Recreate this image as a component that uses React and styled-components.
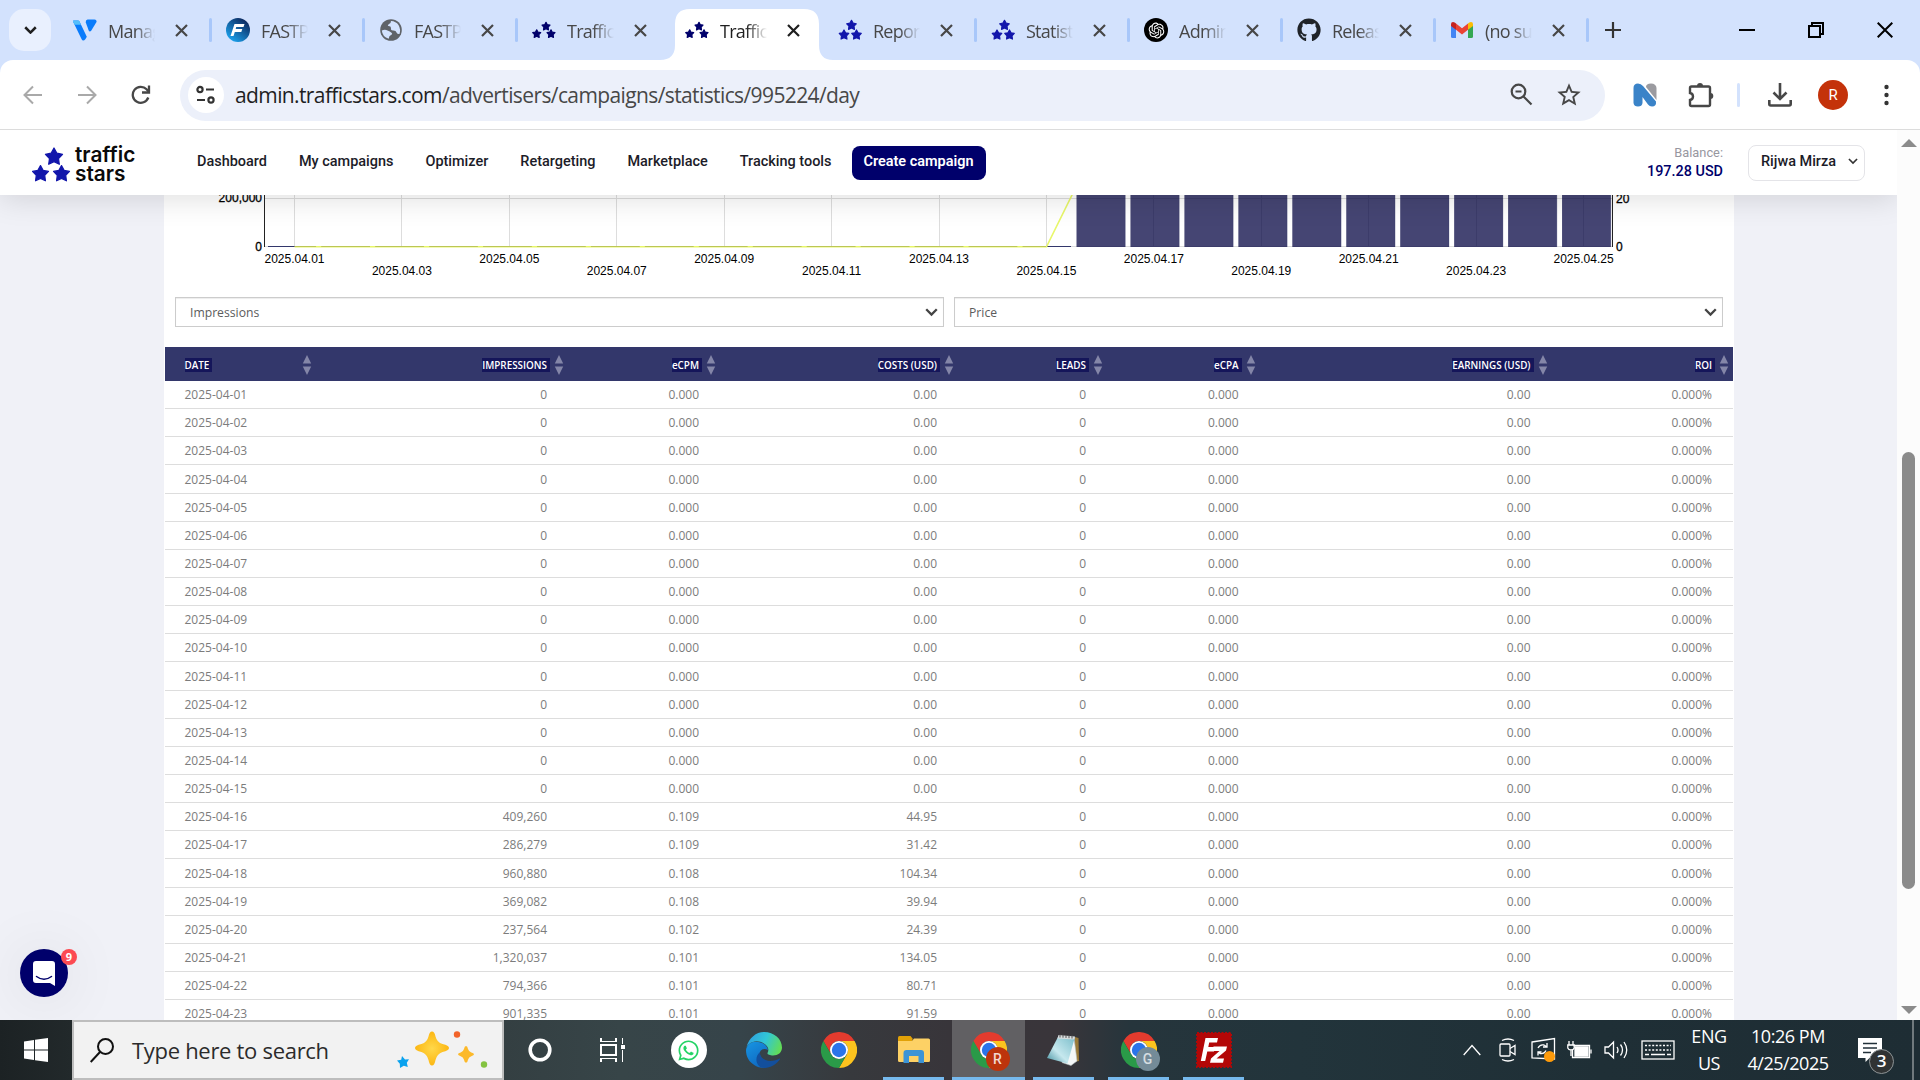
import React from "react";
import styled, { createGlobalStyle, css } from "styled-components";
import { FaGithub, FaWhatsapp } from "react-icons/fa";
import { RiOpenaiFill } from "react-icons/ri";
import { MdStarOutline } from "react-icons/md";

const Global = createGlobalStyle`
  * { box-sizing: border-box; }
  html, body { margin: 0; height: 100%; overflow: hidden; background: #fff; }
  svg { display: block; flex: none; }
`;
const ui = `"Open Sans", "Noto Sans", sans-serif`;

const Screen = styled.div`
  width: 1920px;
  height: 1080px;
  display: flex;
  flex-direction: column;
  overflow: hidden;
  font-family: ${ui};
`;

/* ---------- browser: tab strip ---------- */
const TabStrip = styled.div`
  height: 60px;
  flex: none;
  display: flex;
  background: #d3e2fd;
  padding-left: 9px;
`;
const TabSearch = styled.div`
  width: 42px;
  height: 42px;
  margin: 9px 7px 0 0;
  border-radius: 15px;
  background: #e9f0fe;
  display: flex;
  align-items: center;
  justify-content: center;
`;
const TabBox = styled.div`
  width: 153px;
  height: 60px;
  padding-left: 15px;
  display: flex;
  align-items: center;
  position: relative;
  color: ${(p) => (p.$active ? "#1f1f1f" : "#474747")};
  ${(p) =>
    p.$sep &&
    css`
      &::after {
        content: "";
        position: absolute;
        right: -1px;
        top: 18px;
        width: 3px;
        height: 24px;
        border-radius: 2px;
        background: #a8c7fa;
      }
    `}
  & > * { position: relative; }
`;
const ActiveShape = styled.svg`
  && { position: absolute; }
  left: -10px;
  top: 9px;
`;
const TabTitle = styled.div`
  width: 48px;
  margin: 2px 19px 0 11px;
  font-size: 18px;
  line-height: 26px;
  letter-spacing: -0.75px;
  white-space: nowrap;
  overflow: hidden;
  mask-image: linear-gradient(90deg, #000 55%, transparent 98%);
`;
const NewTab = styled.div`
  width: 50px;
  display: flex;
  align-items: center;
  justify-content: center;
`;
const WinControls = styled.div`
  margin-left: auto;
  padding-right: 1px;
  display: flex;
  & > div {
    width: 69px;
    height: 60px;
    display: flex;
    align-items: center;
    justify-content: center;
  }
`;

const starPath = (cx, cy, r) => {
  const pts = [];
  for (let i = 0; i < 10; i++) {
    const a = (-90 + i * 36) * (Math.PI / 180);
    const q = i % 2 ? r * 0.53 : r;
    pts.push(`${(cx + q * Math.cos(a)).toFixed(2)} ${(cy + q * Math.sin(a)).toFixed(2)}`);
  }
  return `M${pts.join("L")}Z`;
};
const Star = ({ cx, cy, r, fill }) => (
  <path d={starPath(cx, cy, r)} fill={fill} stroke={fill} strokeWidth="1.2" strokeLinejoin="round" />
);
const StarsSmall = () => (
  <svg width="24" height="24">
    <Star cx={14} cy={8.5} r={4.2} fill="#00006b" />
    <Star cx={4.7} cy={16} r={4.2} fill="#00006b" />
    <Star cx={19} cy={16} r={4.2} fill="#00006b" />
  </svg>
);
const StarsBlue = () => (
  <svg width="24" height="24">
    <Star cx={13.5} cy={7.3} r={5} fill="#1216ab" />
    <Star cx={6} cy={17} r={5} fill="#1216ab" />
    <Star cx={18.5} cy={17} r={5} fill="#1216ab" />
  </svg>
);
const VFavicon = () => (
  <svg width="24" height="24">
    <path d="M1 2.500q-1.500 0-1 1l8.500 17.500q1.500 3 4 0l1.300-2.300L6.500 3.500Q6 2.500 5 2.500z" fill="#0a7cfb" />
    <path d="M0 3.500q-.5-1 1-1H5Q6 2.500 6.500 3.500l1.500 3.200H1.700z" fill="#55bffb" />
    <path d="M14.500 1.500h7q2.500.5 2 2.500L18 13q-1.500 1-2.300-.5L12.800 4.500q-.5-2.500 1.700-3z" fill="#0a7cfb" />
  </svg>
);
const FFavicon = () => (
  <svg width="24" height="24" viewBox="0 0 24 24">
    <defs>
      <linearGradient id="ff" x1=".1" y1=".9" x2=".8" y2="0">
        <stop offset="0" stopColor="#1ba6f2" />
        <stop offset="1" stopColor="#0b2055" />
      </linearGradient>
    </defs>
    <circle cx="12" cy="12" r="12" fill="url(#ff)" />
    <path d="M8.500 6h10l-1 3h-7.300l-.5 2h6.600l-1 2.900H8.800L7.500 18H4.500z" fill="#fff" />
  </svg>
);
const Globe = () => (
  <svg width="24" height="24">
    <circle cx="12" cy="12" r="10.800" fill="#5f6368" />
    <path d="M2.800 12.500Q6 11 8.500 12.500q2.500 1 4 2.200 1.500 1.500-.5 2.300-2 .5-2.300 3.800Q3.500 19 2.800 12.500z" fill="#d3e2fd" />
    <path d="M12 3q5 .3 7.500 4 2.500 4.500 1 9-2 .5-3-1.500-.5-2-3-2-3 .3-2.500-2.500 0-2-2.500-2Q8 7.500 10 6q2-.5 2-3z" fill="#d3e2fd" />
  </svg>
);
const Gmail = () => (
  <svg width="24" height="24" viewBox="0 0 24 24">
    <path d="M1 7v11.500Q1 20 2.500 20H6V10z" fill="#4285f4" />
    <path d="M23 7v11.500Q23 20 21.500 20H18V10z" fill="#34a853" />
    <path d="M6 5.500l6 4.700 6-4.700v6.200l-6 4.700-6-4.700z" fill="#ea4335" />
    <path d="M1 6.300Q1 4 3 4q1 0 1.700.5L6 5.500v6.200L1 8z" fill="#c5221f" />
    <path d="M23 6.300Q23 4 21 4q-1 0-1.700.5L18 5.500v6.200l5-3.700z" fill="#fbbc04" />
  </svg>
);
const OpenAI = styled.div`
  width: 24px;
  height: 24px;
  border-radius: 50%;
  background: #000;
  color: #fff;
  display: flex;
  align-items: center;
  justify-content: center;
`;
const Close = () => (
  <svg width="13" height="13" viewBox="0 0 13 13" stroke="currentColor" strokeWidth="2.2">
    <path d="M1 1l11 11M12 1L1 12" />
  </svg>
);

const Tab = ({ title, icon, active, sep }) => (
  <TabBox $active={active} $sep={sep}>
    {active && (
      <ActiveShape width="173" height="51">
        <path d="M0 51Q15 51 15 36V15Q15 0 30 0H144Q159 0 159 15V36Q159 51 173 51Z" fill="#fff" />
      </ActiveShape>
    )}
    {icon}
    <TabTitle>{title}</TabTitle>
    <Close />
  </TabBox>
);

/* ---------- browser: toolbar ---------- */
const ToolbarBack = styled.div`
  background: #d3e2fd;
  flex: none;
`;
const Toolbar = styled.div`
  height: 70px;
  background: #fff;
  border-radius: 13px 13px 0 0;
  border-bottom: 1px solid #dcdcdc;
  display: flex;
  align-items: center;
  padding: 1px 23px 0 23px;
  color: #474747;
`;
const NavIcons = styled.div`
  display: flex;
  gap: 34px;
  width: 157px;
  color: #a9a9a9;
`;
const Omnibox = styled.div`
  width: 1425px;
  height: 51px;
  border-radius: 26px;
  background: #ecf0fa;
  display: flex;
  align-items: center;
  padding: 0 22px 0 8px;
`;
const SiteInfo = styled.div`
  width: 36px;
  height: 36px;
  border-radius: 50%;
  background: #fff;
  display: flex;
  align-items: center;
  justify-content: center;
  margin-right: 11px;
`;
const Url = styled.div`
  flex: 1;
  font-size: 21px;
  line-height: 30px;
  padding-bottom: 1px;
  letter-spacing: -0.61px;
  color: #474747;
  white-space: nowrap;
  b { font-weight: 400; color: #1f1f1f; }
`;
const OmniIcons = styled.div`
  display: flex;
  align-items: center;
  gap: 22px;
`;
const Extensions = styled.div`
  flex: 1;
  display: flex;
  align-items: center;
  padding-left: 28px;
`;
const Divider = styled.div`
  width: 3px;
  height: 24px;
  border-radius: 2px;
  background: #d3e2fd;
  margin: 0 28px 0 23px;
`;
const Avatar = styled.div`
  width: 30px;
  height: 30px;
  border-radius: 50%;
  background: #c4320a;
  color: #fff;
  font: 400 15px/30px Roboto, sans-serif;
  text-align: center;
  margin: 0 36px 0 26px;
`;

/* ---------- page ---------- */
const Viewport = styled.div`
  height: 890px;
  flex: none;
  display: flex;
`;
const Page = styled.div`
  width: 1897px;
  height: 890px;
  background: #f0f1f7;
  display: flex;
  flex-direction: column;
  overflow: hidden;
  position: relative;
`;
const Header = styled.header`
  height: 65px;
  flex: none;
  background: #fff;
  box-shadow: 0 4px 30px rgba(0, 0, 0, 0.13);
  position: relative;
  z-index: 1;
  display: flex;
  align-items: center;
  padding: 0 32px;
  font-family: Roboto, sans-serif;
`;
const Brand = styled.div`
  width: 149px;
  display: flex;
  align-items: center;
  gap: 4px;
  padding-top: 3px;
`;
const BrandName = styled.div`
  display: flex;
  flex-direction: column;
  font: 600 20.800px/19.500px Inter, sans-serif;
  color: #0a0a0a;
`;
const NavLink = styled.a`
  padding: 0 16px 2px;
  font-size: 14.460px;
  font-weight: 500;
  color: #1c1c28;
  white-space: nowrap;
`;
const Cta = styled.a`
  width: 134px;
  height: 34px;
  margin-left: 4px;
  padding-bottom: 2px;
  border-radius: 8px;
  background: #00006b;
  color: #fff;
  font-size: 14.460px;
  font-weight: 600;
  display: flex;
  align-items: center;
  justify-content: center;
  white-space: nowrap;
`;
const Balance = styled.div`
  margin-left: auto;
  padding-bottom: 2px;
  text-align: right;
  font-size: 12.800px;
  line-height: 19px;
  color: #97979f;
  strong {
    display: block;
    font-size: 14.400px;
    font-weight: 500;
    color: #00006b;
  }
`;
const UserMenu = styled.div`
  width: 117px;
  height: 36px;
  margin-left: 25px;
  border: 1px solid #e4e4e8;
  border-radius: 8px;
  display: flex;
  align-items: center;
  justify-content: space-between;
  padding: 0 6px 2px 12px;
  font-size: 14.460px;
  font-weight: 500;
  color: #1c1c28;
  white-space: nowrap;
`;
const Panel = styled.main`
  width: 1570px;
  height: 825px;
  margin: 0 0 0 164px;
  background: #fff;
  overflow: hidden;
`;
const ChartSvg = styled.svg`
  font: 12px "Liberation Sans", Arial, sans-serif;
`;
const AxisLabel = styled.text`
  stroke: #000;
  stroke-width: 0.3px;
`;
const Selects = styled.div`
  display: flex;
  gap: 10px;
  padding: 0 11px;
  margin-bottom: 20px;
`;
const SelectBox = styled.div`
  flex: 1;
  height: 30px;
  border: 1px solid #ccc;
  box-shadow: inset 0 1px 1px rgba(0, 0, 0, 0.075);
  display: flex;
  align-items: center;
  justify-content: space-between;
  padding: 1px 5px 0 14px;
  font-size: 12.200px;
  color: #5c5c5c;
`;
const cols = "151px 252px 152px 238px 149px 152.5px 292px 181.5px";
const THead = styled.div`
  display: grid;
  grid-template-columns: ${cols};
  width: 1568px;
  height: 34px;
  margin-left: 1px;
  background: #33376b;
`;
const Th = styled.div`
  display: flex;
  align-items: center;
  justify-content: ${(p) => (p.$left ? "space-between" : "flex-end")};
  padding: 1px 4px 0 ${(p) => (p.$left ? "19.5px" : "0")};
  gap: 4px;
`;
const ThLabel = styled.span`
  background: #15165a;
  color: #fff;
  font-size: 9.900px;
  font-weight: 600;
  line-height: 14px;
  padding-right: 3px;
  white-space: nowrap;
`;
const Tr = styled.div`
  display: grid;
  grid-template-columns: ${cols};
  width: 1568px;
  height: 28.150px;
  margin-left: 1px;
  border-bottom: 1px solid #ddd;
  font-size: 12px;
  line-height: 27px;
  color: #7c7c7c;
`;
const Td = styled.div`
  text-align: ${(p) => (p.$left ? "left" : "right")};
  padding: 0.2px 21px 0 19.500px;
  white-space: nowrap;
`;
const Scrollbar = styled.div`
  width: 23px;
  height: 890px;
  background: #fcfcfc;
  display: flex;
  flex-direction: column;
  align-items: center;
  padding: 9px 0 6px;
`;
const Thumb = styled.div`
  width: 13px;
  height: 437px;
  margin-top: 305px;
  margin-bottom: auto;
  border-radius: 7px;
  background: #8b8b8b;
`;
const Chat = styled.div`
  position: absolute;
  left: 20px;
  top: 819px;
  width: 48px;
  height: 48px;
  border-radius: 50%;
  background: #00006b;
  box-shadow: 0 2px 60px rgba(0, 0, 0, 0.1);
  display: flex;
  align-items: center;
  justify-content: center;
`;
const ChatBadge = styled.div`
  position: absolute;
  left: 41px;
  top: 0;
  width: 16px;
  height: 16px;
  border-radius: 50%;
  background: #fc4a52;
  color: #fff;
  font: 700 11px/16px "Open Sans", sans-serif;
  text-align: center;
`;

const Chart = () => {
  const x = (v) => v - 164;
  const y = (v) => v - 195;
  const labels = Array.from({ length: 13 }, (_, k) => ({
    text: `2025.04.${String(1 + 2 * k).padStart(2, "0")}`,
    cx: x(294.5 + 107.42 * k),
    by: y(k % 2 ? 274.5 : 263),
  }));
  const barX = (k) => x(1076.5 + 53.95 * k);
  return (
    <ChartSvg width="1570" height="102">
      <g stroke="#ddd" shapeRendering="crispEdges">
        <path d={`M${x(265)} 3.5H${x(1612)}M${x(265)} 51.5H${x(1612)}`} />
        {labels.map((l) => (
          <path key={l.text} d={`M${Math.floor(l.cx) + 0.5} 0V52`} />
        ))}
      </g>
      <path d={`M${x(268)} 51.5H${x(1071)}`} stroke="#33376b" />
      {Array.from({ length: 10 }, (_, k) => (
        <g key={k}>
          <rect x={barX(k)} y="0" width="48.800" height="52" fill="#00003f" fillOpacity=".73" />
          <path d={`M${barX(k) + 48.8} 0V52`} stroke="#33376b" strokeOpacity=".25" />
        </g>
      ))}
      <path d={`M${x(294.6)} 51.800H${x(1046.5)}L${x(1072.5)} -1`} fill="none" stroke="#e8f76a" strokeWidth="1.600" />
      {Array.from({ length: 15 }, (_, k) => {
        const s = Math.max(barX(k - 15), x(295));
        const e = Math.min(barX(k - 15) + 48.8, x(1046));
        return e > s ? <path key={k} d={`M${s} 51.500H${e}`} stroke="#bcc655" /> : null;
      })}
      <path d={`M${x(264.5)} 0V52M${x(1612.5)} 0V52`} stroke="#222" shapeRendering="crispEdges" />
      <AxisLabel x={x(262)} y="7" textAnchor="end">200,000</AxisLabel>
      <AxisLabel x={x(262)} y="56" textAnchor="end">0</AxisLabel>
      <AxisLabel x={x(1616)} y="8">20</AxisLabel>
      <AxisLabel x={x(1616)} y="56">0</AxisLabel>
      {labels.map((l) => (
        <text key={l.text} x={l.cx} y={l.by} textAnchor="middle">{l.text}</text>
      ))}
    </ChartSvg>
  );
};

const Chevron = ({ w = 12, sw = 2, color = "#444" }) => (
  <svg width={w} height={w * 0.65} viewBox="0 0 12 8" fill="none" stroke={color} strokeWidth={sw}>
    <path d="M1 1.200l5 5 5-5" />
  </svg>
);
const SortIcon = () => (
  <svg width="10" height="20" fill="#8486a8">
    <path d="M5 0l4.200 8.500H.8zM5 20L.8 11.500h8.400z" />
  </svg>
);

const traffic = [
  ["409,260", "0.109", "44.95"],
  ["286,279", "0.109", "31.42"],
  ["960,880", "0.108", "104.34"],
  ["369,082", "0.108", "39.94"],
  ["237,564", "0.102", "24.39"],
  ["1,320,037", "0.101", "134.05"],
  ["794,366", "0.101", "80.71"],
  ["901,335", "0.101", "91.59"],
];
const rows = Array.from({ length: 23 }, (_, i) => {
  const [imp, ecpm, cost] = i < 15 ? ["0", "0.000", "0.00"] : traffic[i - 15];
  return [`2025-04-${String(i + 1).padStart(2, "0")}`, imp, ecpm, cost, "0", "0.000", "0.00", "0.000%"];
});
const heads = ["DATE", "IMPRESSIONS", "eCPM", "COSTS (USD)", "LEADS", "eCPA", "EARNINGS (USD)", "ROI"];

/* ---------- taskbar ---------- */
const Taskbar = styled.footer`
  height: 60px;
  flex: none;
  display: flex;
  background: linear-gradient(90deg, #1c2224 0, #22292b 72px, #343f42 504px, #374548 620px, #36444a 740px, #37393d 850px, #38353a 950px, #39353a 1060px, #26353c 1130px, #22343b 1300px, #1f2f36 1600px, #1e2d34 1920px);
`;
const TaskCell = styled.div`
  width: ${(p) => p.$w || 75}px;
  height: 60px;
  display: flex;
  align-items: center;
  justify-content: center;
  position: relative;
`;
const AppFace = styled.div`
  width: ${(p) => (p.$active ? 73 : 61)}px;
  height: 60px;
  display: flex;
  align-items: center;
  justify-content: center;
  background: ${(p) => (p.$active ? "#616063" : "transparent")};
  border-bottom: ${(p) => (p.$open ? "3px solid #76b9ed" : "0")};
  padding-top: ${(p) => (p.$open ? "3px" : "0")};
`;
const SearchBox = styled.div`
  width: 432px;
  height: 60px;
  background: #f2f2f2;
  border: 2px solid #bdbdbd;
  display: flex;
  align-items: center;
  padding: 0 14px 0 16px;
  font-size: 22px;
  letter-spacing: -0.3px;
  color: #2b2b2b;
  span { flex: 1; padding: 0 0 0 17px; white-space: nowrap; }
`;
const White = styled.div`
  width: 36px;
  height: 36px;
  border-radius: 50%;
  background: #fff;
  color: #25d366;
  display: flex;
  align-items: center;
  justify-content: center;
`;
const ChromeWrap = styled.div`
  position: relative;
  width: 36px;
  height: 36px;
`;
const Profile = styled.div`
  position: absolute;
  left: 15px;
  top: 15px;
  width: 24px;
  height: 24px;
  border-radius: 50%;
  background: ${(p) => p.$bg};
  color: ${(p) => p.$fg};
  font: 500 14px/24px Roboto, sans-serif;
  text-align: center;
`;
const Tray = styled.div`
  margin-left: auto;
  display: flex;
  color: #fff;
  font-size: 18px;
  line-height: 27px;
  text-align: center;
  letter-spacing: -0.45px;
  white-space: nowrap;
`;
const NotifCount = styled.div`
  position: absolute;
  left: 30px;
  top: 29px;
  width: 25px;
  height: 25px;
  border-radius: 50%;
  border: 1px solid #8e9496;
  background: #303334;
  font: 600 17px/22px "Open Sans", sans-serif;
  text-align: center;
`;
const PeekLine = styled.div`
  width: 8px;
  height: 60px;
  border-left: 2px solid #70797d;
`;

const Chrome = () => (
  <svg width="36" height="36" viewBox="0 0 48 48">
    <path d="M24 12H44.790A24 24 0 0 0 3.210 12L13.600 30A12 12 0 0 1 24 12z" fill="#e33b2e" />
    <path d="M34.400 30L24 48A24 24 0 0 0 44.790 12H24A12 12 0 0 1 34.400 30z" fill="#fcc31e" />
    <path d="M13.600 30L3.210 12A24 24 0 0 0 24 48L34.400 30A12 12 0 0 1 13.600 30z" fill="#2a9a48" />
    <circle cx="24" cy="24" r="12" fill="#fff" />
    <circle cx="24" cy="24" r="9.600" fill="#2a74ea" />
  </svg>
);
const Edge = () => (
  <svg width="36" height="36">
    <defs>
      <linearGradient id="eg" x1="0" y1=".3" x2="1" y2=".6">
        <stop offset="0" stopColor="#2e9fe0" />
        <stop offset=".5" stopColor="#31c6d6" />
        <stop offset="1" stopColor="#63dd55" />
      </linearGradient>
      <linearGradient id="eb" x1="0" y1="0" x2=".6" y2="1">
        <stop offset="0" stopColor="#1795e3" />
        <stop offset="1" stopColor="#0f68c0" />
      </linearGradient>
    </defs>
    <path d="M.5 15C3 6 10 0 18 0c10 0 18 7 18 15.500 0 5-4 8-9 8-3 0-6-1-5.500-2.500 1-1.500 1-3.500.5-5C20 11 12 8 7 10c-3 1-5 2.500-6.500 5z" fill="url(#eg)" />
    <path d="M0 18c1-6 6-9 12-8 6 .5 9.500 4.500 10 8-3-2-7-1-8 2-1 6 4 11 10 13-4 3.500-10 3.500-15 .5C3 30 0 25 0 18z" fill="url(#eb)" />
    <path d="M14 20c-.5 5 4 8.700 10.500 9 3.500 0 6.500-1 9-2.500.5-.2.800.3.500.800C30 33 23 36.800 16.500 35.800 10 34 8 25 14 20z" fill="#134f9c" />
  </svg>
);
const Folder = () => (
  <svg width="32" height="28">
    <path d="M0 1.500Q0 0 1.500 0H12.500l2 2.500V8H0z" fill="#e1a107" />
    <path d="M0 5H14l2-2.500H30.500Q32 2.500 32 4V24.500Q32 26 30.500 26H1.500Q0 26 0 24.500z" fill="#fdd165" />
    <path d="M5.500 27V17Q5.500 14 8.500 14H23Q26 14 26 17V27H20.500V20H11V27z" fill="#3c94d6" />
  </svg>
);
const Notepad = () => (
  <svg width="36" height="36">
    <defs>
      <linearGradient id="np" x1="0" y1="1" x2="1" y2="0">
        <stop offset="0" stopColor="#3d8c9b" />
        <stop offset=".4" stopColor="#c6e8ee" />
        <stop offset="1" stopColor="#78bcc9" />
      </linearGradient>
    </defs>
    <path d="M29 5l3.500 1 .5 23-5 1z" fill="#9a7a38" />
    <path d="M28 5.500l3 23.500-6 4.500-9-3z" fill="#f4f7f7" stroke="#b8c2c4" strokeWidth=".6" />
    <path d="M12.500 4L29 5 21.500 31.500 1 26z" fill="url(#np)" />
    <path d="M12.500 3L29 4.500l-.6 3L11.500 6.500z" fill="#d8dcdd" />
    <path d="M14 2.500v3M17 2.700v3M20 3v3M23 3.200v3M26 3.500v3" stroke="#555" strokeWidth="1" />
  </svg>
);
const FileZilla = () => (
  <svg width="36" height="36">
    <rect x="1" y="1" width="34" height="34" fill="#b30707" stroke="#b30707" strokeWidth="2" strokeDasharray="2 1.500" />
    <path d="M9.500 6H22l-1 4.500H13.200l-.9 4.500H19l-1 4.500H11.300L9.200 29H4.800z" fill="#fff" />
    <path d="M17.500 14.500H31l-1 4-9.500 8H28l-1 4.300H14l1-4.300L23.500 19h-7z" fill="#fff" />
  </svg>
);
const Sparkles = () => (
  <svg width="92" height="40">
    <defs>
      <radialGradient id="sp">
        <stop offset="0" stopColor="#ffd84a" />
        <stop offset="1" stopColor="#fcb713" />
      </radialGradient>
    </defs>
    <path d="M36 1.500q2.500 0 3.500 5 1.500 6 7 7.500 6.500 1.500 6.500 4t-6.500 4q-5.500 2-7 8-1 5.500-3.500 5.500t-3.500-5.500q-1.500-6-7-8-6.500-1.500-6.500-4t6.500-4q5.500-1.500 7-7.500 1-5 3.500-5z" fill="url(#sp)" />
    <path d="M70 16q1.500 0 2 3 .8 2.700 3.300 3.500Q78 23.200 78 24.300t-2.700 2q-2.500.800-3.300 3.500-.5 3-2 3t-2-3q-.8-2.700-3.300-3.500-2.700-.8-2.700-2t2.700-1.800q2.500-.8 3.300-3.500.5-3 2-3z" fill="#fcb92a" />
    <path d="M6 26l3 3.500 4-.2-2.200 3.500 1 4.200-4-1.200L4 38l-.2-4.200L1 30.500l4.200-.8z" fill="#0aa2ee" />
    <circle cx="61" cy="4.500" r="3.200" fill="#f2642a" />
    <circle cx="88" cy="34.500" r="3.200" fill="#84c341" />
  </svg>
);

const line = { fill: "none", stroke: "#fff", strokeWidth: 1.3 };

export default function App() {
  return (
    <Screen>
      <Global />
      <TabStrip>
        <TabSearch>
          <Chevron w={13} sw={2.4} color="#1f1f1f" />
        </TabSearch>
        <Tab title="Manage" icon={<VFavicon />} sep />
        <Tab title="FASTPANEL" icon={<FFavicon />} sep />
        <Tab title="FASTPANEL" icon={<Globe />} sep />
        <Tab title="TrafficStars" icon={<StarsSmall />} />
        <Tab title="TrafficStars" icon={<StarsSmall />} active />
        <Tab title="Reports" icon={<StarsBlue />} sep />
        <Tab title="Statistics" icon={<StarsBlue />} sep />
        <Tab title="Admin" icon={<OpenAI><RiOpenaiFill size={19} /></OpenAI>} sep />
        <Tab title="Releases" icon={<FaGithub size={24} color="#1f2328" />} sep />
        <Tab title="(no subject)" icon={<Gmail />} sep />
        <NewTab>
          <svg width="16" height="16" stroke="#333" strokeWidth="2.200"><path d="M8 0v16M0 8h16" /></svg>
        </NewTab>
        <WinControls>
          <div><svg width="16" height="2"><path d="M0 1h16" stroke="#000" strokeWidth="2" /></svg></div>
          <div>
            <svg width="16" height="16" fill="none" stroke="#000" strokeWidth="2">
              <path d="M1 4h11v11H1zM4 4V1h11v11h-3" />
            </svg>
          </div>
          <div><svg width="16" height="16" stroke="#000" strokeWidth="2"><path d="M.7.7l14.600 14.600M15.300.7L.7 15.300" /></svg></div>
        </WinControls>
      </TabStrip>
      <ToolbarBack>
        <Toolbar>
          <NavIcons>
            <svg width="20" height="20" fill="none" stroke="currentColor" strokeWidth="2"><path d="M19 10H2M10 1.500L1.500 10l8.500 8.500" /></svg>
            <svg width="20" height="20" fill="none" stroke="currentColor" strokeWidth="2"><path d="M1 10h17M10 1.500l8.500 8.500-8.500 8.500" /></svg>
            <svg width="20" height="20" fill="none" stroke="#474747" strokeWidth="2.300">
              <path d="M17.300 12.500A8 8 0 1 1 15.600 4.300L17.500 6.500" /><path d="M18 0.500V7.500H11" />
            </svg>
          </NavIcons>
          <Omnibox>
            <SiteInfo>
              <svg width="20" height="20" fill="none" stroke="#333" strokeWidth="2.200">
                <circle cx="4" cy="4.500" r="2.600" /><path d="M10 4.500h8M1 15h8" /><circle cx="15" cy="15" r="2.600" />
              </svg>
            </SiteInfo>
            <Url><b>admin.trafficstars.com</b>/advertisers/campaigns/statistics/995224/day</Url>
            <OmniIcons>
              <svg width="24" height="24" fill="none" stroke="#474747" strokeWidth="2.200">
                <circle cx="9.500" cy="8.500" r="6.800" /><path d="M14.500 13.500l8 8M6.500 8.500h6" />
              </svg>
              <MdStarOutline size={28} />
            </OmniIcons>
          </Omnibox>
          <Extensions>
            <svg width="24" height="24">
              <path d="M13 4Q13 .5 18 .5T23.500 5V17z" fill="#9b9ba0" />
              <path d="M.5 5Q.5.500 5 .5 8 .5 10 3L23 18.500Q23.500 23.500 19 23.500 16.500 23.500 15 21.500L9.500 14V20Q9 23.500 5 23.500T.5 20z" fill="#3a83c8" />
            </svg>
            <svg width="26" height="26" fill="none" stroke="#474747" strokeWidth="2.400" style={{ marginLeft: 31 }}>
              <path d="M3.500 4.500H20.500Q22 4.500 22 6V22.500Q22 24 20.500 24H3.500Q2 24 2 22.500V18Q5 17.500 5 14.500T2 11V6Q2 4.500 3.500 4.500z" />
              <path d="M9 4Q9 1 12 1t3 3zM22.500 11q2.800 0 2.800 3t-2.800 3z" fill="#474747" stroke="none" />
            </svg>
            <Divider />
            <svg width="24" height="24" fill="none" stroke="#474747" strokeWidth="2.600">
              <path d="M12 0V15.500M5.500 9.500l6.500 6.500 6.500-6.500M1.300 17V21Q1.300 22.500 2.800 22.500H21.200Q22.700 22.500 22.700 21V17" />
            </svg>
            <Avatar>R</Avatar>
            <svg width="5" height="22" fill="#333"><circle cx="2.500" cy="3" r="2.200" /><circle cx="2.500" cy="11" r="2.200" /><circle cx="2.500" cy="19" r="2.200" /></svg>
          </Extensions>
        </Toolbar>
      </ToolbarBack>
      <Viewport>
        <Page>
          <Header>
            <Brand>
              <svg width="39" height="37">
                <Star cx={22} cy={11} r={9} fill="#1216ab" />
                <Star cx={8.5} cy={28} r={8.4} fill="#1216ab" />
                <Star cx={29.5} cy={28} r={8.4} fill="#1216ab" />
              </svg>
              <BrandName><span>traffic</span><span>stars</span></BrandName>
            </Brand>
            {["Dashboard", "My campaigns", "Optimizer", "Retargeting", "Marketplace", "Tracking tools"].map((t) => (
              <NavLink key={t}>{t}</NavLink>
            ))}
            <Cta>Create campaign</Cta>
            <Balance>Balance:<strong>197.28 USD</strong></Balance>
            <UserMenu>Rijwa Mirza<Chevron w={10} color="#333" /></UserMenu>
          </Header>
          <Panel>
            <Chart />
            <Selects>
              <SelectBox>Impressions<Chevron w={13} sw={2.2} /></SelectBox>
              <SelectBox>Price<Chevron w={13} sw={2.2} /></SelectBox>
            </Selects>
            <THead>
              {heads.map((h, i) => (
                <Th key={h} $left={i === 0}><ThLabel>{h}</ThLabel><SortIcon /></Th>
              ))}
            </THead>
            {rows.map((r) => (
              <Tr key={r[0]}>
                {r.map((c, i) => <Td key={i} $left={i === 0}>{c}</Td>)}
              </Tr>
            ))}
          </Panel>
          <Chat>
            <svg width="22" height="25">
              <path d="M3 0H19Q22 0 22 3V25L17 22H3Q0 22 0 19V3Q0 0 3 0z" fill="#fff" />
              <path d="M3.500 15.500q7.500 5.500 15 0" fill="none" stroke="#00006b" strokeWidth="1.500" strokeLinecap="round" />
            </svg>
            <ChatBadge>9</ChatBadge>
          </Chat>
        </Page>
        <Scrollbar>
          <svg width="16" height="8"><path d="M8 0l8 8H0z" fill="#8b8b8b" /></svg>
          <Thumb />
          <svg width="16" height="8"><path d="M0 0h16l-8 8z" fill="#8b8b8b" /></svg>
        </Scrollbar>
      </Viewport>
      <Taskbar>
        <TaskCell $w={72}>
          <svg width="24" height="24" fill="#fff"><path d="M0 3.400L10 2v9.500H0zM11 1.800L24 0v11.500H11zM0 12.500h10V22L0 20.600zM11 12.500h13V24l-13-1.800z" /></svg>
        </TaskCell>
        <SearchBox>
          <svg width="25" height="25" fill="none" stroke="#111" strokeWidth="2"><circle cx="15.500" cy="8.500" r="7.500" /><path d="M10 14L.7 24" /></svg>
          <span>Type here to search</span>
          <Sparkles />
        </SearchBox>
        <TaskCell $w={72}>
          <svg width="24" height="24"><circle cx="12" cy="12" r="9.800" fill="none" stroke="#fff" strokeWidth="3.600" /></svg>
        </TaskCell>
        <TaskCell $w={75}>
          <svg width="28" height="24" {...line} shapeRendering="crispEdges">
            <path d="M1 7h15v10H1zM1 0v3.500h15V0M1 24v-3.500h15V24M22.500 0v6M22.500 12v12" />
            <path d="M21 7h3.500v3.500H21z" fill="#fff" stroke="none" />
          </svg>
        </TaskCell>
        <TaskCell><AppFace><White><FaWhatsapp size={23} /></White></AppFace></TaskCell>
        <TaskCell><AppFace><Edge /></AppFace></TaskCell>
        <TaskCell><AppFace><Chrome /></AppFace></TaskCell>
        <TaskCell><AppFace $open><Folder /></AppFace></TaskCell>
        <TaskCell><AppFace $open $active><ChromeWrap><Chrome /><Profile $bg="#bd340c" $fg="#f3d9cf">R</Profile></ChromeWrap></AppFace></TaskCell>
        <TaskCell><AppFace $open><Notepad /></AppFace></TaskCell>
        <TaskCell><AppFace $open><ChromeWrap><Chrome /><Profile $bg="#748b98" $fg="#d5dde1">G</Profile></ChromeWrap></AppFace></TaskCell>
        <TaskCell><AppFace $open><FileZilla /></AppFace></TaskCell>
        <Tray>
          <TaskCell $w={36}><svg width="18" height="12" {...line}><path d="M.7 11L9 1.500 17.300 11" /></svg></TaskCell>
          <TaskCell $w={36}>
            <svg width="18" height="24" {...line}>
              <rect x="1" y="6" width="10" height="12" rx="1" /><path d="M11 10.500l5-3v9l-5-3M3 2.500q6-3 12 0M3 21.500q6 3 12 0" />
            </svg>
          </TaskCell>
          <TaskCell $w={35}>
            <svg width="25" height="26" {...line}>
              <path d="M1 5L23.500 1.500V22L1 21z" />
              <path d="M7 11q2-4 6-3l2.500 1.500M16 6v4h-4M15 13.500q-2 4-6 3l-1.500-1M7 18.500v-3.500h3.500" />
              <circle cx="18.500" cy="19.500" r="5.500" fill="#fd9a0a" stroke="none" />
            </svg>
          </TaskCell>
          <TaskCell $w={37}>
            <svg width="25" height="18" {...line}>
              <path d="M6.500 4.500H22.500V16.500H5.500V9" /><path d="M8 6H21V15H8z" fill="#fff" /><path d="M24 8.500v4M2 0v4M6 0v4M.8 4H7.200V7Q6.500 9 4 9T.8 7zM4 9v6" />
            </svg>
          </TaskCell>
          <TaskCell $w={36}>
            <svg width="24" height="20" {...line}>
              <path d="M1 7h3.500L9.500 2v16l-5-5H1zM13 7q2 3 0 6M16.500 4.500q4 5.500 0 11M20 2q5.500 8 0 16" />
            </svg>
          </TaskCell>
          <TaskCell $w={47}>
            <svg width="34" height="20" {...line}>
              <rect x="1" y="1" width="32" height="18" />
              <path d="M4 5.500H30M4 10H30" strokeDasharray="2 1.600" strokeWidth="1.600" /><path d="M4 14.500h4M10 14.500h14M26 14.500h4" strokeWidth="1.600" />
            </svg>
          </TaskCell>
          <TaskCell $w={56}>ENG<br />US</TaskCell>
          <TaskCell $w={102}>10:26 PM<br />4/25/2025</TaskCell>
          <TaskCell $w={73}>
            <svg width="24" height="25" style={{ marginRight: 11 }}>
              <path d="M0 0H24V20H11.500L7.500 24V20H0z" fill="#fff" /><path d="M5 5.500h14M5 10h14M5 14.500h8" stroke="#22313a" strokeWidth="1.400" />
            </svg>
            <NotifCount>3</NotifCount>
          </TaskCell>
          <PeekLine />
        </Tray>
      </Taskbar>
    </Screen>
  );
}
